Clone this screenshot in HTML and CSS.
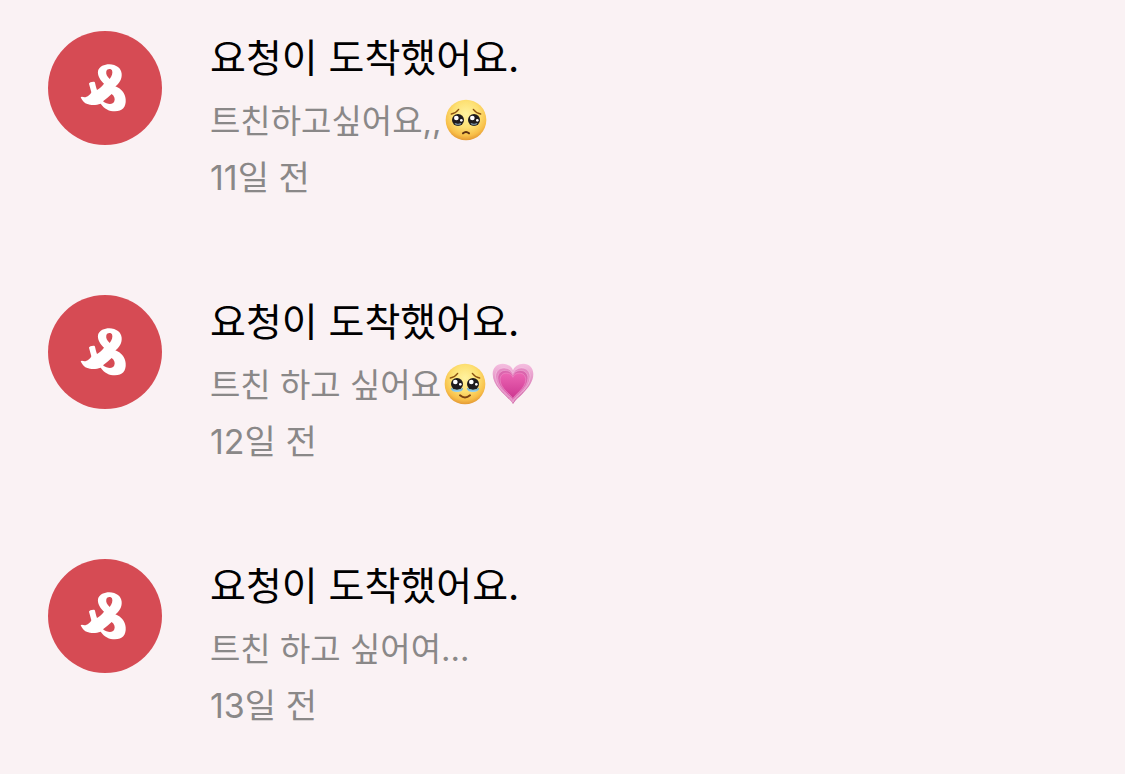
FILE: index.html
```html
<!DOCTYPE html>
<html lang="ko">
<head>
  <meta charset="UTF-8">
  <meta name="viewport" content="width=device-width, initial-scale=1">
  <title>알림</title>
  <link rel="stylesheet" href="styles.css">
</head>
<body>

  <!-- Shared drawings -->
  <svg class="defs" width="0" height="0" aria-hidden="true">
    <defs>
      <radialGradient id="faceFill" cx="0.5" cy="0.36" r="0.66">
        <stop offset="0" stop-color="#fff3a0"/>
        <stop offset="0.5" stop-color="#fde072"/>
        <stop offset="0.8" stop-color="#f8bf49"/>
        <stop offset="1" stop-color="#e0922f"/>
      </radialGradient>
      <linearGradient id="tearFill" x1="0" y1="0" x2="0" y2="1">
        <stop offset="0" stop-color="#4f9ed2"/>
        <stop offset="1" stop-color="#a5d9ee"/>
      </linearGradient>
      <linearGradient id="heartOuter" x1="0" y1="0" x2="0" y2="1">
        <stop offset="0" stop-color="#f5bfe0"/>
        <stop offset="1" stop-color="#c9549d"/>
      </linearGradient>
      <linearGradient id="heartInner" x1="0" y1="0" x2="0" y2="1">
        <stop offset="0" stop-color="#ec66b4"/>
        <stop offset="1" stop-color="#cc3590"/>
      </linearGradient>
      <path id="heartShape" d="M63 124C57 106 2 76 2 33C2 14 15 2 32 2C48 2 59 11 63 22C67 11 78 2 94 2C111 2 124 14 124 33C124 76 69 106 63 124Z"/>
    </defs>
    <symbol id="logo" viewBox="0 0 180 168">
      <path fill="#fff" fill-rule="evenodd" d="M17 112C21 107 26 114 33 111C40 109 47 103 49 97L42 71C42 67 54 64 59 66C61 70 62 80 66 90C74 85 82 78 87 71C75 60 67 46 69 33C73 19 88 13 103 13C124 14 139 25 140 41C141 57 134 69 121 79C138 86 151 99 152 118C154 141 142 154 120 154C103 154 88 147 77 131C67 134 57 136 45 134C30 133 23 124 17 112ZM104 57C96 50 92 42 94 34C96 26 107 25 111 31C114 39 111 49 104 57ZM84 124C93 117 102 110 110 102C118 108 121 116 118 124C114 135 97 134 84 124Z"/>
    </symbol>
    <symbol id="eyes" viewBox="0 0 126 126">
      <circle cx="63" cy="63" r="61" fill="url(#faceFill)"/>
      <circle cx="39" cy="63" r="18" fill="#1f1b1d"/>
      <circle cx="87" cy="63" r="18" fill="#1f1b1d"/>
      <circle cx="34" cy="57" r="7" fill="#fff"/>
      <circle cx="82" cy="57" r="7" fill="#fff"/>
      <circle cx="49" cy="64" r="4" fill="#fff"/>
      <circle cx="97" cy="64" r="4" fill="#fff"/>
      <path d="M19 45C29 43 36 38 41 31M107 45C97 43 90 38 85 31" fill="none" stroke="#8a5010" stroke-width="4" stroke-linecap="round"/>
    </symbol>
    <symbol id="pleading" viewBox="0 0 126 126">
      <use href="#eyes"/>
      <path d="M31 74Q39 79 47 74M79 74Q87 79 95 74" fill="none" stroke="#6f8494" stroke-width="4" stroke-linecap="round"/>
      <path d="M54 103Q63 95 72 103" fill="none" stroke="#5e3213" stroke-width="6" stroke-linecap="round"/>
    </symbol>
    <symbol id="tears" viewBox="0 0 126 126">
      <use href="#eyes"/>
      <path d="M21 74Q39 86 57 74C57 83 50 87 39 87C28 87 21 83 21 74ZM69 74Q87 86 105 74C105 83 98 87 87 87C76 87 69 83 69 74Z" fill="url(#tearFill)"/>
      <path d="M48 97Q63 110 78 97" fill="none" stroke="#7d4412" stroke-width="6" stroke-linecap="round"/>
    </symbol>
    <symbol id="heart" viewBox="0 0 126 126">
      <use href="#heartShape" fill="url(#heartOuter)"/>
      <use href="#heartShape" fill="#e48ac2" stroke="#f7c9e6" stroke-width="2" transform="translate(9 13) scale(.85)"/>
      <use href="#heartShape" fill="#da65ad" stroke="#f3b3da" stroke-width="2" transform="translate(16 21) scale(.74)"/>
      <use href="#heartShape" fill="url(#heartInner)" stroke="#f3a0d2" stroke-width="2" transform="translate(23 29) scale(.63)"/>
    </symbol>
  </svg>

  <ul class="notifications">
    <li class="item">
      <div class="avatar"><svg class="logo" aria-hidden="true"><use href="#logo"/></svg></div>
      <div class="info">
        <h2 class="title">요청이 도착했어요.</h2>
        <p class="message">트친하고싶어요,,<svg class="emoji" role="img" aria-label="🥺"><use href="#pleading"/></svg></p>
        <p class="time">11일 전</p>
      </div>
    </li>
    <li class="item">
      <div class="avatar"><svg class="logo" aria-hidden="true"><use href="#logo"/></svg></div>
      <div class="info">
        <h2 class="title">요청이 도착했어요.</h2>
        <p class="message">트친 하고 싶어요<svg class="emoji" role="img" aria-label="🥹"><use href="#tears"/></svg><svg class="emoji" role="img" aria-label="💗"><use href="#heart"/></svg></p>
        <p class="time">12일 전</p>
      </div>
    </li>
    <li class="item">
      <div class="avatar"><svg class="logo" aria-hidden="true"><use href="#logo"/></svg></div>
      <div class="info">
        <h2 class="title">요청이 도착했어요.</h2>
        <p class="message">트친 하고 싶어여...</p>
        <p class="time">13일 전</p>
      </div>
    </li>
  </ul>

</body>
</html>
```
FILE: styles.css
```css
body {
  font-family: Inter, "Noto Sans CJK KR", sans-serif;
  background: #faf2f4;
  margin: 0;
}

.defs {
  position: absolute;
}

.notifications {
  list-style: none;
  margin: 0;
  padding: 31px 48px 0;
  display: flex;
  flex-direction: column;
  gap: 90px;
}

.item {
  display: flex;
  align-items: flex-start;
  gap: 48px;
}

.avatar {
  flex: none;
  width: 114px;
  height: 114px;
  border-radius: 50%;
  background: #d64b54;
  display: flex;
  align-items: center;
  justify-content: center;
}

.logo {
  width: 60px;
  height: 56px;
}

.info {
  flex: 1;
}

.title {
  margin: 0 0 8px;
  font-size: 39px;
  font-weight: 400;
  line-height: 54px;
  color: #000;
}

.message, .time {
  margin: 0;
  font-size: 33px;
  line-height: 57px;
  color: #8a8888;
}

.time {
  font-size: 34px;
  line-height: 55px;
}

.emoji {
  width: 42px;
  height: 42px;
  margin: 0 3px;
  vertical-align: -8px;
}
```
